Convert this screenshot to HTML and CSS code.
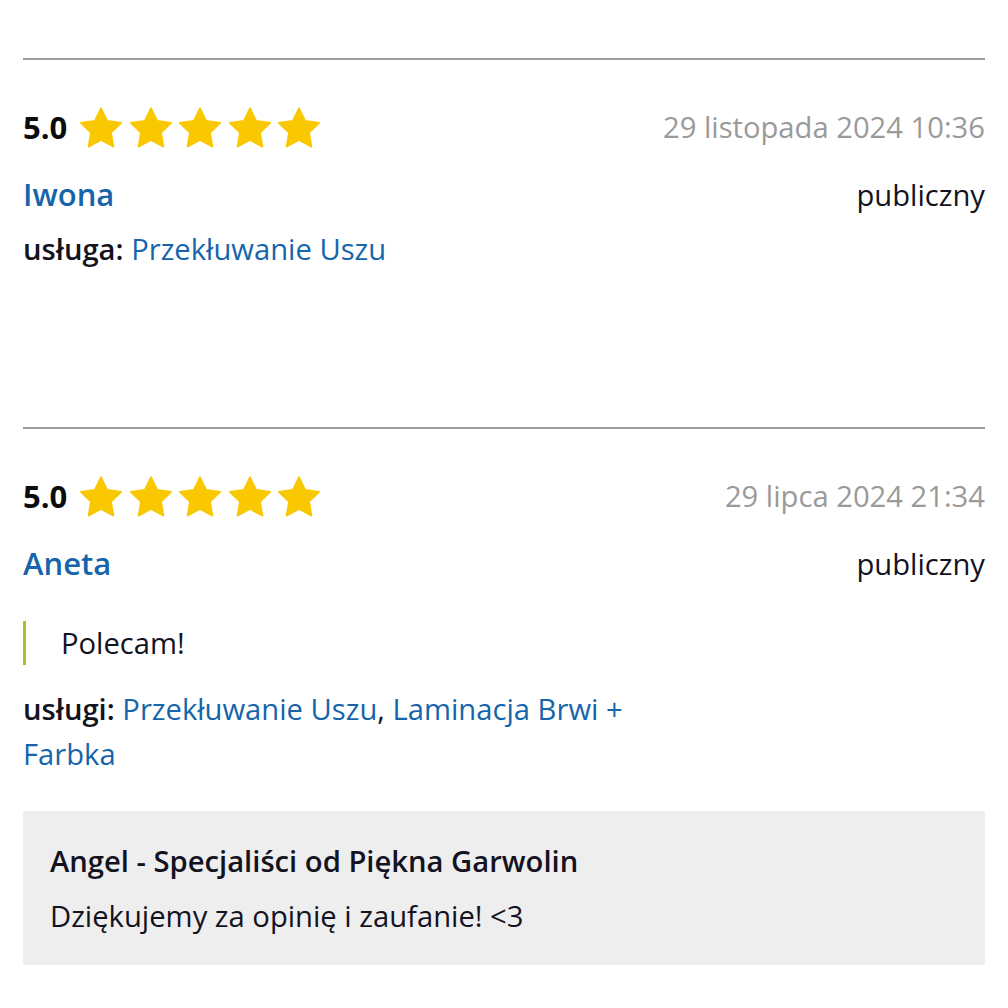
FILE: index.html
```html
<!DOCTYPE html>
<html lang="pl">
<head>
<meta charset="utf-8">
<title>Opinie</title>
<link rel="stylesheet" href="styles.css">
</head>
<body>
<svg width="0" height="0" class="defs">
  <defs>
    <symbol id="star" viewBox="1.2 1.2 21.6 20.8">
      <path d="M12 1.6l3.2 6.6 7.2 1-5.2 5.1 1.25 7.2L12 18.1l-6.45 3.4 1.25-7.2L1.6 9.2l7.2-1z" fill="#fac800" stroke="#fac800" stroke-width="0.8" stroke-linejoin="round"/>
    </symbol>
  </defs>
</svg>
<main class="reviews">
  <article class="review review-first">
    <div class="review-head">
      <div class="rating">
        <span class="score">5.0</span>
        <span class="stars">
          <svg class="star"><use href="#star"/></svg>
          <svg class="star"><use href="#star"/></svg>
          <svg class="star"><use href="#star"/></svg>
          <svg class="star"><use href="#star"/></svg>
          <svg class="star"><use href="#star"/></svg>
        </span>
      </div>
      <span class="date">29 listopada 2024 10:36</span>
    </div>
    <div class="author-row">
      <a class="author" href="#">Iwona</a>
      <span class="visibility">publiczny</span>
    </div>
    <p class="services"><b>usługa:</b> <a href="#">Przekłuwanie Uszu</a></p>
  </article>

  <article class="review">
    <div class="review-head">
      <div class="rating">
        <span class="score">5.0</span>
        <span class="stars">
          <svg class="star"><use href="#star"/></svg>
          <svg class="star"><use href="#star"/></svg>
          <svg class="star"><use href="#star"/></svg>
          <svg class="star"><use href="#star"/></svg>
          <svg class="star"><use href="#star"/></svg>
        </span>
      </div>
      <span class="date">29 lipca 2024 21:34</span>
    </div>
    <div class="author-row">
      <a class="author" href="#">Aneta</a>
      <span class="visibility">publiczny</span>
    </div>
    <blockquote class="quote">Polecam!</blockquote>
    <p class="services"><b>usługi:</b> <a href="#">Przekłuwanie Uszu</a>, <a href="#">Laminacja Brwi + Farbka</a></p>
    <div class="reply">
      <div class="reply-title">Angel - Specjaliści od Piękna Garwolin</div>
      <div class="reply-text">Dziękujemy za opinię i zaufanie! &lt;3</div>
    </div>
  </article>
</main>
</body>
</html>
```

FILE: styles.css
```css
html, body {
  margin: 0;
  padding: 0;
  background: #fff;
}
body {
  font-family: "Open Sans", "Liberation Sans", sans-serif;
  font-size: 29.2px;
  color: #13131f;
}
.defs {
  position: absolute;
  width: 0;
  height: 0;
}
.reviews {
  padding: 58px 23px 0;
}
.review {
  border-top: 2px solid #9d9d9d;
  padding-top: 46px;
}
.review-first {
  height: 321px;
}
.review-head {
  display: flex;
  justify-content: space-between;
  align-items: center;
  height: 42px;
}
.rating {
  display: flex;
  align-items: center;
}
.score {
  font-weight: 700;
  font-size: 31px;
  color: #0c0c0c;
  margin-right: 13px;
}
.stars {
  display: flex;
  gap: 7.5px;
}
.star {
  width: 42px;
  height: 41px;
  display: block;
}
.date {
  color: #9a9a9a;
}
.author-row {
  display: flex;
  justify-content: space-between;
  align-items: baseline;
  margin-top: 25px;
  height: 40px;
}
.author {
  color: #1665ab;
  font-weight: 600;
  font-size: 31px;
  text-decoration: none;
}
.services {
  margin: 14px 0 0;
  line-height: 45px;
  max-width: 640px;
}
.services b {
  font-weight: 600;
}
.services a {
  color: #1665ab;
  text-decoration: none;
}
.quote {
  margin: 39px 0 0;
  padding: 0 0 0 35px;
  border-left: 3px solid #a8c41c;
  line-height: 44px;
}
.quote + .services {
  margin-top: 22px;
}
.reply {
  background: #eeeeee;
  margin-top: 34px;
  padding: 30px 27px 29px;
}
.reply-title {
  font-weight: 600;
  line-height: 40px;
}
.reply-text {
  margin-top: 15px;
  line-height: 40px;
}
```
